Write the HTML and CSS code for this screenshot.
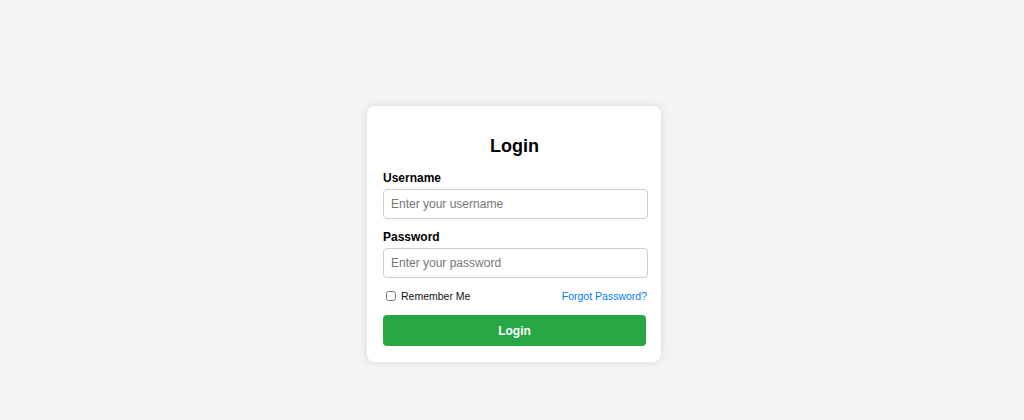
FILE: index.html
```html
<!DOCTYPE html>
<html lang="en">
<head>
<meta charset="utf-8">
<title>Login</title>
<link rel="stylesheet" href="styles.css">
</head>
<body>
  <div class="page">
    <form class="card" onsubmit="return false">
      <h2 class="title">Login</h2>
      <div class="group">
        <label class="label" for="username">Username</label>
        <input class="field" id="username" type="text" placeholder="Enter your username">
      </div>
      <div class="group">
        <label class="label" for="password">Password</label>
        <input class="field" id="password" type="password" placeholder="Enter your password">
      </div>
      <div class="options">
        <label class="remember"><input class="check" type="checkbox"><span>Remember Me</span></label>
        <a class="forgot" href="#">Forgot Password?</a>
      </div>
      <button class="submit" type="submit">Login</button>
    </form>
  </div>
</body>
</html>
```
FILE: styles.css
```css
html, body {
  margin: 0;
  padding: 0;
  background: #f4f4f4;
  font-family: "Liberation Sans", Arial, sans-serif;
}

.page {
  display: flex;
  justify-content: center;
  align-items: flex-start;
  padding: 106px 0 0 4px;
  min-height: 420px;
  box-sizing: border-box;
}

.card {
  width: 294px;
  box-sizing: border-box;
  background: #fff;
  border-radius: 8px;
  box-shadow: 0 0 10px rgba(0, 0, 0, 0.12);
  padding: 16px 13px 16px 16px;
  display: flex;
  flex-direction: column;
}

.title {
  margin: 14px 0 15px;
  font-size: 18px;
  line-height: 20px;
  font-weight: bold;
  text-align: center;
  color: #000;
  padding-right: 2px;
}

.group {
  display: flex;
  flex-direction: column;
  margin-bottom: 11px;
}

.label {
  font-size: 12px;
  line-height: 14px;
  font-weight: bold;
  color: #000;
  margin-bottom: 4px;
}

.field {
  height: 30px;
  box-sizing: border-box;
  width: 100%;
  border: 1px solid #ccc;
  border-radius: 4px;
  padding: 0 7px;
  font-family: "Liberation Sans", Arial, sans-serif;
  font-size: 12px;
  color: #333;
  background: #fff;
  outline: none;
}

.field::placeholder {
  color: #767676;
}

.options {
  display: flex;
  justify-content: space-between;
  align-items: center;
  height: 14px;
  margin-bottom: 12px;
  padding-right: 1px;
}

.remember {
  display: flex;
  align-items: center;
  font-size: 10.5px;
  color: #111;
}

.check {
  width: 10px;
  height: 10px;
  margin: 0 5px 0 3px;
}

.forgot {
  font-size: 10.5px;
  color: #007bff;
  text-decoration: none;
}

.submit {
  height: 31px;
  margin-right: 2px;
  border: none;
  border-radius: 4px;
  background: #28a745;
  color: #fff;
  font-family: "Liberation Sans", Arial, sans-serif;
  font-size: 12px;
  font-weight: bold;
  cursor: pointer;
}
```
